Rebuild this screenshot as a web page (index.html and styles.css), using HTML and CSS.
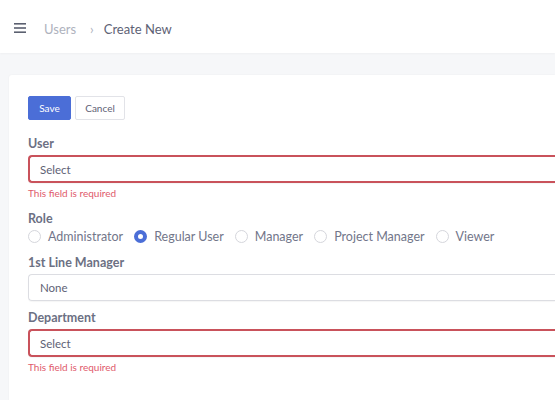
FILE: index.html
```html
<!DOCTYPE html>
<html>
<head>
<meta charset="utf-8">
<link rel="stylesheet" href="styles.css">
</head>
<body>
<header class="topbar">
  <span class="burger"><svg width="12" height="10" viewBox="0 0 12 10"><rect x="0" y="0" width="12" height="1.6" fill="#5b6070"/><rect x="0" y="4.2" width="12" height="1.6" fill="#5b6070"/><rect x="0" y="8.4" width="12" height="1.6" fill="#5b6070"/></svg></span>
  <span class="crumb muted">Users</span>
  <span class="sep">›</span>
  <span class="crumb">Create New</span>
</header>
<main class="content">
  <section class="card">
    <div class="actions">
      <button class="btn btn-primary">Save</button>
      <button class="btn btn-default">Cancel</button>
    </div>
    <div class="field">
      <label class="label">User</label>
      <div class="input invalid">Select</div>
      <div class="error">This field is required</div>
    </div>
    <div class="field">
      <label class="label label-tight">Role</label>
      <div class="radios">
        <span class="radio"><span class="dot"></span>Administrator</span>
        <span class="radio"><span class="dot on"></span>Regular User</span>
        <span class="radio"><span class="dot"></span>Manager</span>
        <span class="radio"><span class="dot"></span>Project Manager</span>
        <span class="radio"><span class="dot"></span>Viewer</span>
      </div>
    </div>
    <div class="field">
      <label class="label">1st Line Manager</label>
      <div class="input">None</div>
    </div>
    <div class="field">
      <label class="label">Department</label>
      <div class="input invalid">Select</div>
      <div class="error">This field is required</div>
    </div>
  </section>
</main>
</body>
</html>
```

FILE: styles.css
```css
* { box-sizing: border-box; }
html, body { margin: 0; padding: 0; }
body {
  width: 555px;
  height: 400px;
  overflow: hidden;
  background: #f6f7f9;
  font-family: Lato, "Noto Sans", sans-serif;
  color: #5e6275;
}
.topbar {
  height: 53px;
  background: #fff;
  display: flex;
  align-items: center;
  padding: 4px 0 0 14px;
  box-shadow: 0 1px 2px rgba(0,0,0,0.03);
  font-size: 13px;
}
.burger { display: flex; width: 12px; margin-right: 18px; margin-top: -1px; }
.crumb { color: #5e6275; }
.crumb.muted { color: #aeb2bd; }
.sep { color: #aeb2bd; margin: 0 10px 0 14px; font-size: 13px; }
.content { padding: 22px 0 0 9px; }
.card {
  background: #fff;
  border-radius: 3px 0 0 0;
  box-shadow: 0 0 2px rgba(0,0,0,0.05);
  padding: 21px 0 30px 19px;
  min-height: 340px;
}
.actions { display: flex; gap: 4px; margin-bottom: 16px; }
.btn {
  font-family: inherit;
  font-size: 10px;
  height: 24px;
  border-radius: 2px;
  padding: 0 9px;
  cursor: pointer;
}
.btn-primary { background: #4b6ed7; color: #fff; border: 1px solid #4b6ed7; width: 43px; }
.btn-default { background: #fff; color: #5e6275; border: 1px solid #e2e3e8; width: 50px; }
.field { margin-bottom: 9px; }
.label { display: block; font-size: 12.5px; font-weight: 700; color: #6c7083; margin-bottom: 3px; line-height: 16px; }
.label-tight { margin-bottom: 0; }
.input {
  height: 27px;
  border: 1px solid #dcdde2;
  border-right: none;
  border-radius: 4px 0 0 4px;
  font-size: 11.5px;
  color: #5e6275;
  padding-left: 11px;
  display: flex;
  align-items: center;
  box-shadow: 0 1px 1px rgba(0,0,0,0.04);
}
.input.invalid { height: 28px; border: 2px solid #c9525b; border-right: none; padding-left: 10px; }
.error { color: #e05a6b; font-size: 10px; margin-top: 4px; padding-bottom: 3px; line-height: 12px; }
.radios { display: flex; align-items: center; height: 18px; margin-bottom: 10px; font-size: 12.5px; color: #72768a; }
.radio { display: flex; align-items: center; margin-right: 11px; }
.dot {
  width: 13px; height: 13px; border-radius: 50%;
  border: 1px solid #d5d6dc;
  margin-right: 7px;
  display: inline-block;
}
.dot.on { border: 4px solid #4b6ed7; }
```
